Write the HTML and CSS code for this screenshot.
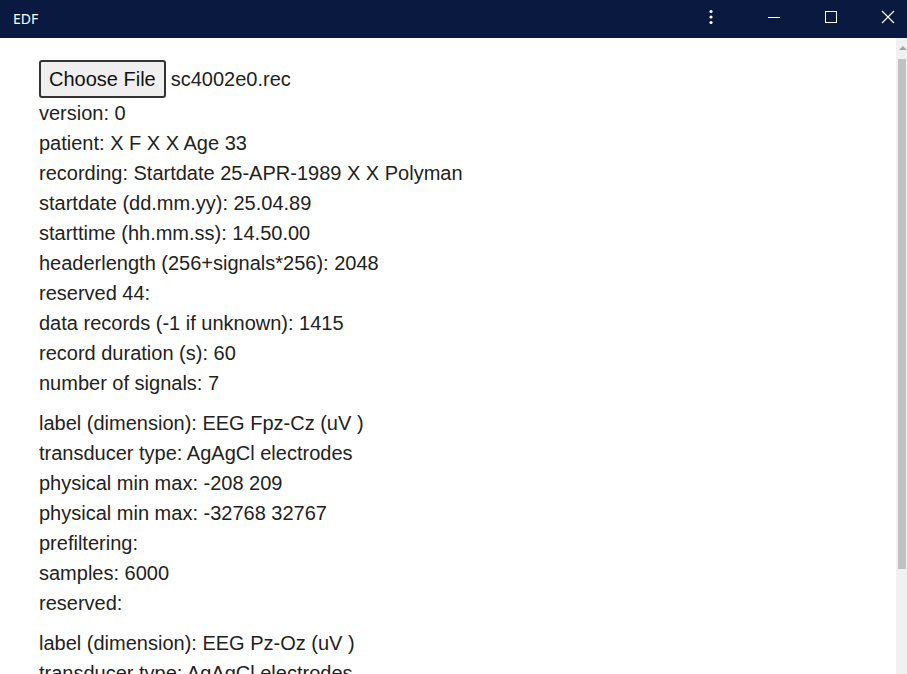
FILE: index.html
```html
<!DOCTYPE html>
<html>
<head>
<meta charset="utf-8">
<title>EDF</title>
<link rel="stylesheet" href="styles.css">
</head>
<body>
<div class="window">
  <header class="titlebar">
    <span class="title">EDF</span>
    <div class="controls">
      <span class="ctl more">
        <svg width="6" height="16" viewBox="0 0 6 16"><circle cx="3" cy="2.5" r="1.6" fill="#fff"/><circle cx="3" cy="8" r="1.6" fill="#fff"/><circle cx="3" cy="13.5" r="1.6" fill="#fff"/></svg>
      </span>
      <span class="ctl">
        <svg width="14" height="14" viewBox="0 0 14 14"><path d="M1 7.5H13" stroke="#fff" stroke-width="1"/></svg>
      </span>
      <span class="ctl">
        <svg width="14" height="14" viewBox="0 0 14 14"><rect x="1.5" y="1.5" width="11" height="11" fill="none" stroke="#fff" stroke-width="1"/></svg>
      </span>
      <span class="ctl">
        <svg width="14" height="14" viewBox="0 0 14 14"><path d="M1 1L13 13M13 1L1 13" stroke="#fff" stroke-width="1.1"/></svg>
      </span>
    </div>
  </header>
  <div class="body-area">
    <main class="content">
      <div class="file-row">
        <button class="file-btn">Choose File</button>
        <span class="file-name">sc4002e0.rec</span>
      </div>
      <section class="block">
        <div class="line">version: 0</div>
        <div class="line">patient: X F X X Age 33</div>
        <div class="line">recording: Startdate 25-APR-1989 X X Polyman</div>
        <div class="line">startdate (dd.mm.yy): 25.04.89</div>
        <div class="line">starttime (hh.mm.ss): 14.50.00</div>
        <div class="line">headerlength (256+signals*256): 2048</div>
        <div class="line">reserved 44:</div>
        <div class="line">data records (-1 if unknown): 1415</div>
        <div class="line">record duration (s): 60</div>
        <div class="line">number of signals: 7</div>
      </section>
      <section class="block">
        <div class="line">label (dimension): EEG Fpz-Cz (uV )</div>
        <div class="line">transducer type: AgAgCl electrodes</div>
        <div class="line">physical min max: -208 209</div>
        <div class="line">physical min max: -32768 32767</div>
        <div class="line">prefiltering:</div>
        <div class="line">samples: 6000</div>
        <div class="line">reserved:</div>
      </section>
      <section class="block">
        <div class="line">label (dimension): EEG Pz-Oz (uV )</div>
        <div class="line">transducer type: AgAgCl electrodes</div>
        <div class="line">physical min max: -208 209</div>
        <div class="line">physical min max: -32768 32767</div>
        <div class="line">prefiltering:</div>
        <div class="line">samples: 6000</div>
        <div class="line">reserved:</div>
      </section>
    </main>
    <div class="scrollbar">
      <div class="arrow-up"></div>
      <div class="thumb"></div>
    </div>
  </div>
</div>
</body>
</html>
```
FILE: styles.css
```css
html, body {
  margin: 0;
  padding: 0;
  width: 907px;
  height: 674px;
  overflow: hidden;
  background: #fff;
}
.window {
  display: flex;
  flex-direction: column;
  width: 907px;
  height: 674px;
  overflow: hidden;
}
.titlebar {
  flex: 0 0 38px;
  height: 38px;
  background: #0a1940;
  display: flex;
  align-items: center;
  justify-content: space-between;
  color: #fff;
  overflow: hidden;
}
.title {
  font-family: "Noto Sans", "Liberation Sans", sans-serif;
  font-size: 14px;
  padding-left: 13px;
  padding-bottom: 2px;
}
.controls {
  display: flex;
  height: 38px;
  align-items: center;
  margin-right: -9px;
}
.ctl {
  width: 57px;
  height: 38px;
  display: flex;
  align-items: center;
  justify-content: center;
  padding-bottom: 4px;
  box-sizing: border-box;
}
.ctl.more {
  width: 20px;
  margin-right: 24px;
}
.body-area {
  flex: 1;
  display: flex;
  min-height: 0;
}
.content {
  flex: 1;
  padding: 22px 0 0 39px;
  overflow: hidden;
  font-family: "Liberation Sans", Arial, sans-serif;
  font-size: 20px;
  color: #222;
}
.file-row {
  display: flex;
  align-items: center;
  height: 38px;
}
.file-btn {
  font-family: "Liberation Sans", Arial, sans-serif;
  font-size: 20px;
  color: #111;
  background: #efefef;
  border: 2px solid #333;
  border-radius: 3px;
  height: 38px;
  padding: 0 8px;
  margin: 0 5px 0 0;
}
.file-name {
  line-height: 38px;
}
.block {
  margin-bottom: 10px;
}
.line {
  line-height: 30px;
  white-space: nowrap;
}
.scrollbar {
  flex: 0 0 11px;
  width: 11px;
  background: #f1f1f1;
  position: relative;
}
.arrow-up {
  position: absolute;
  left: 3px;
  top: 8px;
  width: 0;
  height: 0;
  border-left: 4px solid transparent;
  border-right: 4px solid transparent;
  border-bottom: 4px solid #a3a3a3;
}
.thumb {
  position: absolute;
  left: 2px;
  top: 21px;
  width: 8px;
  height: 510px;
  background: #c1c1c1;
}
```
